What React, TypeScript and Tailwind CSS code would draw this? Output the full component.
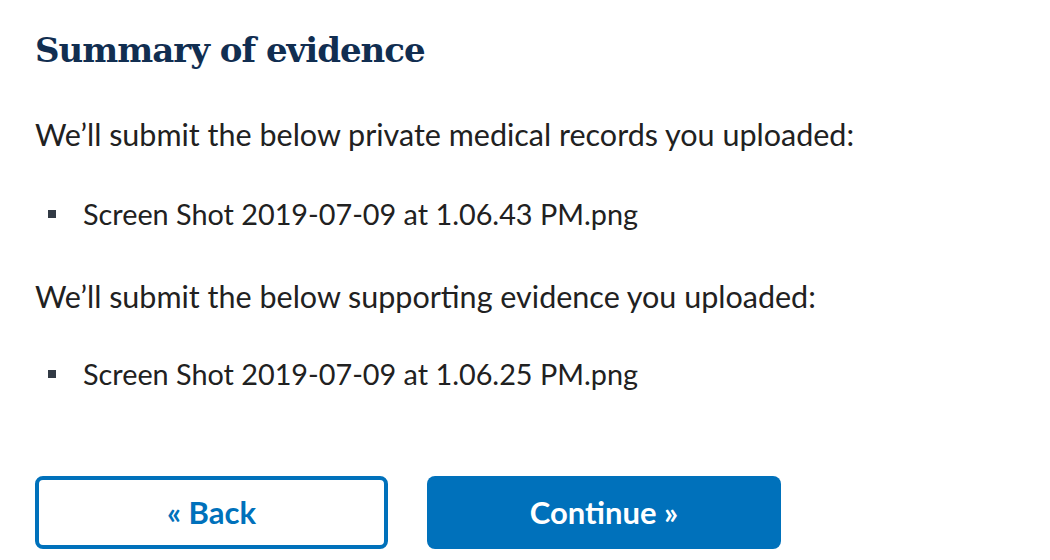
export default function App() {
  const font = "font-['Lato','Liberation_Sans',sans-serif] text-[#212121]";
  return (
    <div className="min-h-screen w-full bg-white pl-[35px] pt-[30px]">
      <h2 className="font-['DejaVu_Serif',serif] text-[34px] font-bold leading-[40px] tracking-[-1px] text-[#112e51]">
        Summary of evidence
      </h2>
      <p className={`${font} mt-[44px] text-[30.5px] leading-[40px]`}>
        We’ll submit the below private medical records you uploaded:
      </p>
      <ul className={`${font} mt-[40px] text-[28.8px] leading-[40px]`}>
        <li className="flex items-center">
          <span className="ml-[13px] mr-[27px] h-[8px] w-[8px] bg-[#323a45]" />
          Screen Shot 2019-07-09 at 1.06.43 PM.png
        </li>
      </ul>
      <p className={`${font} mt-[42px] text-[30.5px] leading-[40px]`}>
        We’ll submit the below supporting evidence you uploaded:
      </p>
      <ul className={`${font} mt-[38px] text-[28.8px] leading-[40px]`}>
        <li className="flex items-center">
          <span className="ml-[13px] mr-[27px] h-[8px] w-[8px] bg-[#323a45]" />
          Screen Shot 2019-07-09 at 1.06.25 PM.png
        </li>
      </ul>
      <div className="mt-[82px] flex gap-[39px] font-['Lato','Liberation_Sans',sans-serif] text-[31px] font-bold">
        <button className="flex h-[73px] w-[353px] items-center justify-center rounded-[8px] border-[4px] border-[#0071bb] bg-white text-[#0071bb]">
          « Back
        </button>
        <button className="flex h-[73px] w-[354px] items-center justify-center rounded-[8px] bg-[#0071bb] text-white">
          Continue »
        </button>
      </div>
    </div>
  );
}
